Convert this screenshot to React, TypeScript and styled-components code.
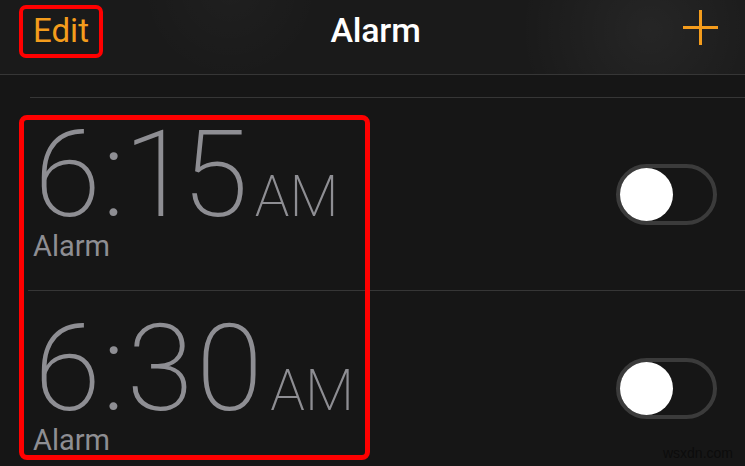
import React from "react";
import styled, { createGlobalStyle } from "styled-components";

const GlobalStyle = createGlobalStyle`
  html, body { margin: 0; padding: 0; background: #161616; }
  body { overflow: hidden; font-family: Roboto, "Liberation Sans", sans-serif; }
`;

const Screen = styled.div`
  position: relative;
  width: 745px;
  height: 466px;
  overflow: hidden;
  background: #161616;
  display: flex;
  flex-direction: column;
`;

const NavBar = styled.header`
  flex: none;
  height: 74px;
  display: grid;
  grid-template-columns: 1fr auto 1fr;
  align-items: center;
  border-bottom: 1px solid #363636;
  background:
    radial-gradient(circle at 650px 30px, rgba(255,255,255,0.05) 0, rgba(255,255,255,0.025) 70px, rgba(255,255,255,0) 130px),
    radial-gradient(circle at 230px -10px, rgba(255,255,255,0.025) 0, rgba(255,255,255,0) 90px),
    #1a1a1a;
`;

const EditButton = styled.button`
  justify-self: start;
  margin: 0 0 0 19px;
  height: 53px;
  width: 84px;
  box-sizing: border-box;
  border: 4px solid #ff0000;
  border-radius: 7px;
  background: transparent;
  color: #f49c1c;
  font-family: Roboto, "Liberation Sans", sans-serif;
  font-size: 33px;
  font-weight: 400;
  padding: 0 0 2px 0;
  line-height: 1;
  align-self: start;
  margin-top: 5px;
`;

const Title = styled.h1`
  margin: 0;
  color: #ffffff;
  font-family: Roboto, "Liberation Sans", sans-serif;
  font-size: 34px;
  font-weight: 500;
  letter-spacing: -0.2px;
  padding: 0 0 14px 6px;
`;

const AddButton = styled.button`
  justify-self: end;
  align-self: start;
  margin: 10px 27px 0 0;
  padding: 0;
  border: 0;
  background: transparent;
  width: 35px;
  height: 35px;
  display: block;
`;

const Gap = styled.div`
  flex: none;
  height: 22px;
`;

const List = styled.div`
  position: relative;
  flex: none;
  &::before {
    content: "";
    position: absolute;
    top: 0;
    left: 30px;
    right: 0;
    height: 1px;
    background: #363636;
  }
`;

const Row = styled.div`
  position: relative;
  height: 194px;
  display: flex;
  justify-content: space-between;
  align-items: center;
  padding: 0 28px 0 33px;
  &::after {
    content: "";
    position: absolute;
    bottom: 0;
    left: 28px;
    right: 0;
    height: 1px;
    background: #363636;
  }
`;

const TimeBlock = styled.div`
  align-self: flex-start;
  padding-top: 18px;
  display: flex;
  flex-direction: column;
  color: #8e8e93;
`;

const TimeLine = styled.div`
  display: flex;
  align-items: baseline;
  line-height: 1;
`;

const Digits = styled.span`
  font-family: Roboto, "Liberation Sans", sans-serif;
  font-size: 121px;
  font-weight: 200;
  letter-spacing: 1.5px;
  font-variant-numeric: proportional-nums;
`;

const Meridiem = styled.span`
  font-family: Roboto, "Liberation Sans", sans-serif;
  font-size: 57px;
  font-weight: 200;
  margin-left: 5px;
`;

const Label = styled.span`
  font-family: Roboto, "Liberation Sans", sans-serif;
  font-size: 29px;
  font-weight: 400;
  line-height: 1;
  margin-top: -4px;
`;

const Track = styled.div`
  width: 101px;
  height: 61px;
  box-sizing: border-box;
  border-radius: 31px;
  border: 4px solid #3b3b3b;
  position: relative;
  background: #161616;
`;

const Knob = styled.div`
  position: absolute;
  top: 0px;
  left: 0px;
  width: 53px;
  height: 53px;
  border-radius: 50%;
  background: #ffffff;
`;

const Highlight = styled.div`
  position: absolute;
  left: 19px;
  top: 115px;
  width: 351px;
  height: 345px;
  box-sizing: border-box;
  border: 5px solid #ff0000;
  border-radius: 8px;
  pointer-events: none;
`;

const Watermark = styled.span`
  position: absolute;
  right: 12px;
  bottom: 5px;
  font-family: "Liberation Sans", Arial, sans-serif;
  font-size: 14px;
  color: #0c0c0c;
`;

const PlusIcon = () => (
  <svg width="35" height="35" viewBox="0 0 35 35">
    <path d="M17.5 0 V35 M0 17.5 H35" stroke="#f49c1c" strokeWidth="3" fill="none" />
  </svg>
);

type Alarm = { time: string; meridiem: string; label: string };

const alarms: Alarm[] = [
  { time: "6:15", meridiem: "AM", label: "Alarm" },
  { time: "6:30", meridiem: "AM", label: "Alarm" },
];

export default function App() {
  return (
    <>
      <GlobalStyle />
      <Screen>
        <NavBar>
          <EditButton>Edit</EditButton>
          <Title>Alarm</Title>
          <AddButton aria-label="Add">
            <PlusIcon />
          </AddButton>
        </NavBar>
        <Gap />
        <List>
          {alarms.map((a) => (
            <Row key={a.time}>
              <TimeBlock>
                <TimeLine>
                  <Digits>{a.time}</Digits>
                  <Meridiem>{a.meridiem}</Meridiem>
                </TimeLine>
                <Label>{a.label}</Label>
              </TimeBlock>
              <Track>
                <Knob />
              </Track>
            </Row>
          ))}
        </List>
        <Highlight />
        <Watermark>wsxdn.com</Watermark>
      </Screen>
    </>
  );
}
